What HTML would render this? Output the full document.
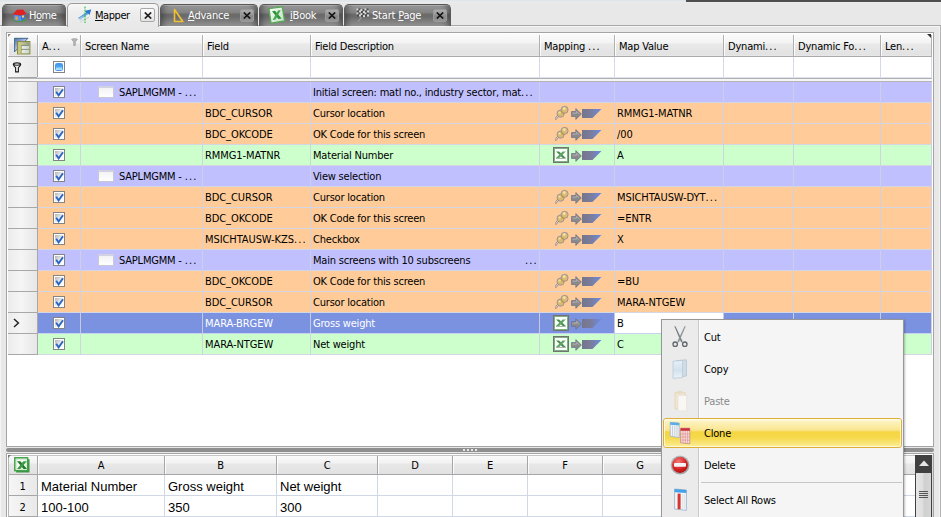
<!DOCTYPE html>
<html lang="en"><head><meta charset="utf-8"><title>Mapper</title>
<style>
html,body{margin:0;padding:0}
body{width:941px;height:517px;overflow:hidden;position:relative;background:#e8e8e8;font-family:"DejaVu Sans Condensed","Liberation Sans",sans-serif;font-size:11px;letter-spacing:-0.2px;color:#000}
div,span,svg{position:absolute;box-sizing:border-box}
.t{white-space:nowrap;line-height:13px;height:13px}
u{text-decoration:underline}
.tab{top:4px;height:22px;border-radius:5px 5px 0 0;border:1px solid #5a5a5a;border-bottom:none;background:linear-gradient(#b2b2b2 0,#b2b2b2 1px,#949494 1.5px,#828282 8px,#6a6a6a 9px,#6c6c6c 12px,#8a8a8a 19px,#989898 21px);color:#fff;box-shadow:inset 7px 0 6px -5px rgba(0,0,0,0.38),inset -7px 0 6px -5px rgba(0,0,0,0.38)}
.tab.act{box-shadow:none;top:3px;height:24px;background:linear-gradient(#f7f7f7,#eeeeee 8px,#e8e8e8);border:1px solid #9c9c9c;border-bottom:none;color:#000}
.cb{width:14px;height:13px;border:1px solid #9a9a9a;border-radius:2px;background:linear-gradient(#acacac 0,#969696 5px,#888888 6px,#949494)}
.tab.act .cb{width:15px;height:14px;border:1px solid #a8a8a8;background:linear-gradient(#fdfdfd,#e2e2e2)}
.hc{top:34px;height:22px;background:linear-gradient(#fbfbfb 0,#f3f3f3 9px,#e9e9e9 10px,#e2e2e2 21px,#ececec 22px)}
.vl{width:1px}
.hl{height:1px}
.row{left:38px;width:893px;height:20px}
.ind{left:8px;width:29px;height:20px;background:linear-gradient(90deg,#ececec,#f5f5f5 45%,#e7e7e7)}
.chk{width:12px;height:12px;border:1px solid #848484;background:#fff}
.chk i{position:absolute;left:1px;top:1px;width:8px;height:8px;background:linear-gradient(135deg,#b4b4b4,#f4f4f4 60%,#fff)}
.sh{font-family:"Liberation Sans",sans-serif;font-size:13px;letter-spacing:0;line-height:15px;height:15px;white-space:nowrap}
.shh{font-size:11px;line-height:13px;height:13px;white-space:nowrap;text-align:center}
.d{position:static;letter-spacing:1.1px}
.mi{left:704px;white-space:nowrap;line-height:13px;height:13px}
</style></head>
<body>
<div style="left:0;top:0;width:686px;height:2px;background:linear-gradient(#dfe4e8,#e6e9ec)"></div>
<div style="left:686px;top:0;width:255px;height:2px;background:#4e4e4e"></div>
<div style="left:0;top:2px;width:941px;height:1px;background:#ececec"></div>
<div style="left:0;top:25px;width:941px;height:1px;background:#a9a9a9"></div>
<div style="left:0;top:26px;width:941px;height:1px;background:#f4f4f4"></div>
<div style="left:940px;top:26px;width:1px;height:491px;background:#b4b4b4"></div>
<div style="left:939px;top:27px;width:1px;height:490px;background:#f2f2f2"></div>
<div style="left:0;top:26px;width:1px;height:491px;background:#f4f4f4"></div>
<div class="tab" style="left:2px;width:64px"><svg style="left:9px;top:4px" width="15" height="13" viewBox="0 0 15 13"><ellipse cx="7.5" cy="11" rx="7" ry="1.8" fill="#4a9a3a"/><path d="M2 6 L2 11 L9 12 L13 10 L13 5 Z" fill="#3f78d8"/><path d="M2 6 L9 7 L9 12 L2 11 Z" fill="#5b8fe6"/><path d="M0.5 5.5 L5 0.8 L11 0.5 L14.5 4.8 L9.5 6.6 Z" fill="#e02222"/><rect x="3.5" y="7.5" width="2.2" height="3.6" fill="#e9a23a"/><rect x="10" y="6.5" width="2" height="2" fill="#f3d36a"/></svg><span class="t" style="left:26px;top:4px;letter-spacing:-0.5px">H<u>o</u>me</span></div>
<div class="tab act" style="left:67px;width:92px"><svg style="left:9px;top:2px" width="16" height="18" viewBox="0 0 16 18"><path d="M1 12 L9 6.5 L8 5 L14 3.5 L12.5 9 L11.5 7.8 L3.5 13.5 Z" fill="#5b9fe0"/><path d="M9 6.5 L8 5 L14 3.5 L12.5 9 L11.5 7.8 Z" fill="#2b78cc"/><path d="M1 13 L7 9.5 L4 14 Z" fill="#a9cdee"/><path d="M3 16 L12 11" stroke="#c9c9c9" stroke-width="0.8"/><line x1="8" y1="0.5" x2="8" y2="17" stroke="#35c24a" stroke-width="1.2" stroke-dasharray="2 1"/></svg><span class="t" style="left:27px;top:5px;letter-spacing:-0.45px"><u>M</u>apper</span><div class="cb" style="left:72px;top:4px"><svg style="left:3px;top:3px" width="8" height="7" viewBox="0 0 8 7"><path d="M0.8 0.5 L7.2 6.5 M7.2 0.5 L0.8 6.5" stroke="#1c1c1c" stroke-width="1.7" fill="none"/></svg></div></div>
<div class="tab" style="left:160px;width:98px"><svg style="left:12px;top:3px" width="12" height="16" viewBox="0 0 12 16"><path d="M1.5 1.5 L9.8 13.5 L1.5 13.5 Z" fill="none" stroke="#f0c030" stroke-width="1.6" stroke-linejoin="round"/></svg><span class="t" style="left:27px;top:4px"><u>A</u>dvance</span><div class="cb" style="left:79px;top:4px"><svg style="left:2px;top:2px" width="8" height="7" viewBox="0 0 8 7"><path d="M0.8 0.5 L7.2 6.5 M7.2 0.5 L0.8 6.5" stroke="#141414" stroke-width="1.7" fill="none"/></svg></div></div>
<div class="tab" style="left:259px;width:84px"><svg style="left:8px;top:1px" width="18" height="18" viewBox="0 0 18 18"><defs><linearGradient id="ib" x1="0" y1="0" x2="1" y2="1"><stop offset="0" stop-color="#ffffff"/><stop offset="1" stop-color="#b9e0b9"/></linearGradient></defs><path d="M1 2.6 L14.2 0.8 L16.6 15 L3 17.2 Z" fill="url(#ib)" stroke="#58a858" stroke-width="1.3"/><path d="M4 5.2 L7 4.8 L13.6 12.6 L10.4 13.1 Z" fill="#2f8f3a"/><path d="M10 4.4 L12.8 4 L7.6 13.6 L4.6 14 Z" fill="#44a84e"/></svg><span class="t" style="left:30px;top:4px"><u>i</u>Book</span><div class="cb" style="left:65px;top:4px"><svg style="left:2px;top:2px" width="8" height="7" viewBox="0 0 8 7"><path d="M0.8 0.5 L7.2 6.5 M7.2 0.5 L0.8 6.5" stroke="#141414" stroke-width="1.7" fill="none"/></svg></div></div>
<div class="tab" style="left:344px;width:107px"><svg style="left:10px;top:3px" width="15" height="15" viewBox="0 0 15 15"><rect x="1.5" y="0.5" width="2" height="2" fill="#e4e4e4" opacity="0.9"/><rect x="3.5" y="0.5" width="2" height="2" fill="#3c3c3c" opacity="0.75"/><rect x="5.5" y="1.1" width="2" height="2" fill="#e4e4e4" opacity="0.9"/><rect x="7.5" y="1.1" width="2" height="2" fill="#3c3c3c" opacity="0.75"/><rect x="9.5" y="0.5" width="2" height="2" fill="#e4e4e4" opacity="0.9"/><rect x="11.5" y="0.5" width="2" height="2" fill="#3c3c3c" opacity="0.75"/><rect x="2.0" y="2.5" width="2" height="2" fill="#3c3c3c" opacity="0.75"/><rect x="4.0" y="2.5" width="2" height="2" fill="#e4e4e4" opacity="0.9"/><rect x="6.0" y="3.1" width="2" height="2" fill="#3c3c3c" opacity="0.75"/><rect x="8.0" y="3.1" width="2" height="2" fill="#e4e4e4" opacity="0.9"/><rect x="10.0" y="2.5" width="2" height="2" fill="#3c3c3c" opacity="0.75"/><rect x="12.0" y="2.5" width="2" height="2" fill="#e4e4e4" opacity="0.9"/><rect x="1.5" y="4.5" width="2" height="2" fill="#e4e4e4" opacity="0.9"/><rect x="3.5" y="4.5" width="2" height="2" fill="#3c3c3c" opacity="0.75"/><rect x="5.5" y="5.1" width="2" height="2" fill="#e4e4e4" opacity="0.9"/><rect x="7.5" y="5.1" width="2" height="2" fill="#3c3c3c" opacity="0.75"/><rect x="9.5" y="4.5" width="2" height="2" fill="#e4e4e4" opacity="0.9"/><rect x="11.5" y="4.5" width="2" height="2" fill="#3c3c3c" opacity="0.75"/><rect x="2.0" y="6.5" width="2" height="2" fill="#3c3c3c" opacity="0.75"/><rect x="4.0" y="6.5" width="2" height="2" fill="#e4e4e4" opacity="0.9"/><rect x="6.0" y="7.1" width="2" height="2" fill="#3c3c3c" opacity="0.75"/><rect x="8.0" y="7.1" width="2" height="2" fill="#e4e4e4" opacity="0.9"/><rect x="10.0" y="6.5" width="2" height="2" fill="#3c3c3c" opacity="0.75"/><rect x="12.0" y="6.5" width="2" height="2" fill="#e4e4e4" opacity="0.9"/><path d="M6.5 9 L3.2 13.6" stroke="#9a9a9a" stroke-width="1.1"/></svg><span class="t" style="left:27px;top:4px">Start <u>P</u>age</span><div class="cb" style="left:88px;top:4px"><svg style="left:2px;top:2px" width="8" height="7" viewBox="0 0 8 7"><path d="M0.8 0.5 L7.2 6.5 M7.2 0.5 L0.8 6.5" stroke="#141414" stroke-width="1.7" fill="none"/></svg></div></div>
<div style="left:6px;top:32px;width:928px;height:415px;border:1px solid #a4a4a4;background:#fff"></div>
<div class="hc" style="left:8px;width:29px"></div>
<div class="vl" style="left:37px;top:35px;height:21px;background:#b0b0b0"></div>
<div class="vl" style="left:8px;top:34px;height:22px;background:rgba(255,255,255,0.85)"></div>
<div class="hc" style="left:38px;width:42px"></div>
<div class="vl" style="left:80px;top:35px;height:21px;background:#b0b0b0"></div>
<div class="vl" style="left:38px;top:34px;height:22px;background:rgba(255,255,255,0.85)"></div>
<span class="t" style="left:42px;top:40px">A<span class="d">...</span></span>
<div class="hc" style="left:81px;width:121px"></div>
<div class="vl" style="left:202px;top:35px;height:21px;background:#b0b0b0"></div>
<div class="vl" style="left:81px;top:34px;height:22px;background:rgba(255,255,255,0.85)"></div>
<span class="t" style="left:85px;top:40px">Screen Name</span>
<div class="hc" style="left:203px;width:107px"></div>
<div class="vl" style="left:310px;top:35px;height:21px;background:#b0b0b0"></div>
<div class="vl" style="left:203px;top:34px;height:22px;background:rgba(255,255,255,0.85)"></div>
<span class="t" style="left:207px;top:40px">Field</span>
<div class="hc" style="left:311px;width:228px"></div>
<div class="vl" style="left:539px;top:35px;height:21px;background:#b0b0b0"></div>
<div class="vl" style="left:311px;top:34px;height:22px;background:rgba(255,255,255,0.85)"></div>
<span class="t" style="left:315px;top:40px">Field Description</span>
<div class="hc" style="left:540px;width:74px"></div>
<div class="vl" style="left:614px;top:35px;height:21px;background:#b0b0b0"></div>
<div class="vl" style="left:540px;top:34px;height:22px;background:rgba(255,255,255,0.85)"></div>
<span class="t" style="left:544px;top:40px">Mapping <span class="d">...</span></span>
<div class="hc" style="left:615px;width:108px"></div>
<div class="vl" style="left:723px;top:35px;height:21px;background:#b0b0b0"></div>
<div class="vl" style="left:615px;top:34px;height:22px;background:rgba(255,255,255,0.85)"></div>
<span class="t" style="left:619px;top:40px">Map Value</span>
<div class="hc" style="left:724px;width:69px"></div>
<div class="vl" style="left:793px;top:35px;height:21px;background:#b0b0b0"></div>
<div class="vl" style="left:724px;top:34px;height:22px;background:rgba(255,255,255,0.85)"></div>
<span class="t" style="left:728px;top:40px">Dynami<span class="d">...</span></span>
<div class="hc" style="left:794px;width:86px"></div>
<div class="vl" style="left:880px;top:35px;height:21px;background:#b0b0b0"></div>
<div class="vl" style="left:794px;top:34px;height:22px;background:rgba(255,255,255,0.85)"></div>
<span class="t" style="left:798px;top:40px">Dynamic Fo<span class="d">...</span></span>
<div class="hc" style="left:881px;width:50px"></div>
<div class="vl" style="left:931px;top:35px;height:21px;background:#b0b0b0"></div>
<div class="vl" style="left:881px;top:34px;height:22px;background:rgba(255,255,255,0.85)"></div>
<span class="t" style="left:885px;top:40px">Len<span class="d">...</span></span>
<div class="hl" style="left:8px;top:56px;width:924px;background:#aaaaaa"></div>
<svg style="left:927px;top:34px" width="4" height="4" viewBox="0 0 4 4"><path d="M0 0 L4 0 L4 4 Z" fill="#333"/></svg>
<svg style="left:8px;top:34px" width="3" height="3" viewBox="0 0 3 3"><path d="M0 0 L3 0 L0 3 Z" fill="#8a8a8a"/></svg>
<svg style="left:14px;top:37px" width="17" height="18" viewBox="0 0 17 18"><defs><linearGradient id="cc" x1="0" y1="0" x2="0.7" y2="0.7"><stop offset="0" stop-color="#3f7896"/><stop offset="0.45" stop-color="#8f9ede"/><stop offset="1" stop-color="#f4f4ff"/></linearGradient><linearGradient id="cd" x1="0" y1="0" x2="1" y2="0"><stop offset="0" stop-color="#d6d68c"/><stop offset="1" stop-color="#8fa088"/></linearGradient><linearGradient id="ce" x1="0" y1="0" x2="1" y2="0"><stop offset="0" stop-color="#ffffff"/><stop offset="1" stop-color="#c4d2c4"/></linearGradient></defs><path d="M0.3 1.3 L14 1.3 L0.3 15 Z" fill="url(#cc)" stroke="#2f5f7a" stroke-width="0.9"/><rect x="3.5" y="4.5" width="12.4" height="12.4" fill="url(#ce)" stroke="#8a8a3e"/><rect x="4" y="5" width="11.4" height="3" fill="url(#cd)"/><rect x="4" y="5" width="3" height="11.4" fill="#c9c97e"/><path d="M7 8.5 L15.4 8.5 M7 12.4 L15.4 12.4" stroke="#8f8f86" stroke-width="1"/><path d="M7.4 8.5 L7.4 16.4" stroke="#9a9a56" stroke-width="0.8"/></svg>
<svg style="left:71px;top:38px" width="7" height="8" viewBox="0 0 7 8"><path d="M0.5 1.2 Q3.5 -0.4 6.5 1.2 L4.3 4 L4.3 7.5 L2.7 7.5 L2.7 4 Z" fill="#b5b5b5" stroke="#9a9a9a" stroke-width="0.6"/></svg>
<div style="left:8px;top:57px;width:29px;height:20px;background:linear-gradient(90deg,#f6f6f6,#e9e9e9)"></div>
<div class="vl" style="left:37px;top:57px;height:20px;background:#a6a6a6"></div>
<div class="vl" style="left:80px;top:57px;height:20px;background:#d3d9ea"></div>
<div class="vl" style="left:202px;top:57px;height:20px;background:#d3d9ea"></div>
<div class="vl" style="left:310px;top:57px;height:20px;background:#d3d9ea"></div>
<div class="vl" style="left:539px;top:57px;height:20px;background:#d3d9ea"></div>
<div class="vl" style="left:614px;top:57px;height:20px;background:#d3d9ea"></div>
<div class="vl" style="left:723px;top:57px;height:20px;background:#d3d9ea"></div>
<div class="vl" style="left:793px;top:57px;height:20px;background:#d3d9ea"></div>
<div class="vl" style="left:880px;top:57px;height:20px;background:#d3d9ea"></div>
<div class="vl" style="left:931px;top:57px;height:20px;background:#d3d9ea"></div>
<div class="vl" style="left:931px;top:82px;height:273px;background:#cdd0e2"></div>
<svg style="left:12px;top:62px" width="10" height="11" viewBox="0 0 10 11"><path d="M1.3 2.4 Q1.3 0.9 5 0.9 Q8.7 0.9 8.7 2.4 Q8.7 3.4 6.4 5.6 L6.4 9.9 L3.6 9.9 L3.6 5.6 Q1.3 3.4 1.3 2.4 Z M1.3 2.6 Q5 4 8.7 2.6" fill="none" stroke="#1e1e1e" stroke-width="1.1"/></svg>
<div style="left:53px;top:61px;width:12px;height:12px;border:1px solid #848484;background:#fff"><div style="left:1px;top:1px;width:8px;height:8px;border-radius:1.5px;background:linear-gradient(#3f97ee 0,#52a8f4 3px,#98dafe 4px,#c0eeff 8px);border:1px solid #4a98ea"></div></div>
<div class="hl" style="left:8px;top:77px;width:29px;background:#a4a4a4"></div>
<div class="hl" style="left:8px;top:78px;width:29px;background:#b8b8b8"></div>
<div class="hl" style="left:37px;top:77px;width:895px;background:#dce4f2"></div>
<div class="hl" style="left:37px;top:78px;width:895px;background:#b0b0b0"></div>
<div style="left:8px;top:79px;width:924px;height:2px;background:#f6f6f6"></div>
<div class="hl" style="left:8px;top:81px;width:924px;background:#b4b4b4"></div>
<div class="ind" style="top:82px"></div>
<div class="hl" style="left:8px;top:102px;width:29px;background:#a8a8a8"></div>
<div class="row" style="top:82px;background:#c0c0ff"></div>
<div class="hl" style="left:38px;top:102px;width:893px;background:#d4d6e4"></div>
<div class="chk" style="left:53px;top:86px"><i></i><svg style="left:1px;top:1px" width="9" height="9" viewBox="0 0 9 9"><path d="M1.2 3.8 L3.6 7.4 L8 1.2" stroke="#2a66c2" stroke-width="1.9" fill="none"/></svg></div>
<div style="left:98px;top:86px;width:16px;height:12px;border:1px solid #c9c9d6;border-top:2px solid #d2d2e2;background:linear-gradient(#f3f3f3,#fff)"></div>
<span class="t" style="left:119px;top:86px;color:#000">SAPLMGMM - <span class="d">...</span></span>
<span class="t" style="left:313px;top:86px;color:#000">Initial screen: matl no., industry sector, mat<span class="d">...</span></span>
<div class="ind" style="top:103px"></div>
<div class="hl" style="left:8px;top:123px;width:29px;background:#a8a8a8"></div>
<div class="row" style="top:103px;background:#ffcc99"></div>
<div class="hl" style="left:38px;top:123px;width:893px;background:#d4d6e4"></div>
<div class="chk" style="left:53px;top:107px"><i></i><svg style="left:1px;top:1px" width="9" height="9" viewBox="0 0 9 9"><path d="M1.2 3.8 L3.6 7.4 L8 1.2" stroke="#2a66c2" stroke-width="1.9" fill="none"/></svg></div>
<span class="t" style="left:205px;top:107px;color:#000;letter-spacing:-0.08px">BDC_CURSOR</span>
<span class="t" style="left:313px;top:107px;color:#000">Cursor location</span>
<svg style="left:555px;top:105px" width="14" height="15" viewBox="0 0 14 15"><path d="M3.4 10.4 L0.9 13.6" stroke="#8a8694" stroke-width="2.2" stroke-linecap="round"/><path d="M3.3 10.5 L1 13.5" stroke="#f1e3b4" stroke-width="1" stroke-linecap="round"/><circle cx="5.6" cy="8.6" r="3.6" fill="#d9b96e" stroke="#8d87a0" stroke-width="0.8"/><circle cx="9.6" cy="4.8" r="3.5" fill="#dcbc70" stroke="#8d87a0" stroke-width="0.8"/><path d="M6 6 L9 9" stroke="#b89850" stroke-width="1.2"/><circle cx="9.2" cy="3.6" r="1.4" fill="#f2e2a8"/><circle cx="4.6" cy="7.6" r="1.2" fill="#efdca0"/></svg>
<svg style="left:571px;top:108px" width="11" height="12" viewBox="0 0 11 12"><path d="M0.5 3.5 L4.8 3.5 L4.8 0.6 L10.4 6 L4.8 11.4 L4.8 8.5 L0.5 8.5 Z" fill="#8a8a8a" stroke="#6a6e8c" stroke-width="0.7"/><path d="M1.6 5.2 L5.6 5.2 L5.6 3.4 L8.4 6" stroke="#b4b4b4" stroke-width="0.9" fill="none"/></svg>
<svg style="left:582px;top:109px" width="20" height="9" viewBox="0 0 20 9"><defs><linearGradient id="g1" x1="0" x2="1" y1="0" y2="0"><stop offset="0" stop-color="#75758a"/><stop offset="0.5" stop-color="#7b7da0"/><stop offset="0.8" stop-color="#6f86cc"/><stop offset="1" stop-color="#5f8ee6"/></linearGradient></defs><path d="M0 0 L19.5 0 L10.5 9 L0 9 Z" fill="url(#g1)"/></svg>
<span class="t" style="left:617px;top:107px;color:#000;letter-spacing:-0.08px">RMMG1-MATNR</span>
<div class="ind" style="top:124px"></div>
<div class="hl" style="left:8px;top:144px;width:29px;background:#a8a8a8"></div>
<div class="row" style="top:124px;background:#ffcc99"></div>
<div class="hl" style="left:38px;top:144px;width:893px;background:#d4d6e4"></div>
<div class="chk" style="left:53px;top:128px"><i></i><svg style="left:1px;top:1px" width="9" height="9" viewBox="0 0 9 9"><path d="M1.2 3.8 L3.6 7.4 L8 1.2" stroke="#2a66c2" stroke-width="1.9" fill="none"/></svg></div>
<span class="t" style="left:205px;top:128px;color:#000;letter-spacing:-0.08px">BDC_OKCODE</span>
<span class="t" style="left:313px;top:128px;color:#000">OK Code for this screen</span>
<svg style="left:555px;top:126px" width="14" height="15" viewBox="0 0 14 15"><path d="M3.4 10.4 L0.9 13.6" stroke="#8a8694" stroke-width="2.2" stroke-linecap="round"/><path d="M3.3 10.5 L1 13.5" stroke="#f1e3b4" stroke-width="1" stroke-linecap="round"/><circle cx="5.6" cy="8.6" r="3.6" fill="#d9b96e" stroke="#8d87a0" stroke-width="0.8"/><circle cx="9.6" cy="4.8" r="3.5" fill="#dcbc70" stroke="#8d87a0" stroke-width="0.8"/><path d="M6 6 L9 9" stroke="#b89850" stroke-width="1.2"/><circle cx="9.2" cy="3.6" r="1.4" fill="#f2e2a8"/><circle cx="4.6" cy="7.6" r="1.2" fill="#efdca0"/></svg>
<svg style="left:571px;top:129px" width="11" height="12" viewBox="0 0 11 12"><path d="M0.5 3.5 L4.8 3.5 L4.8 0.6 L10.4 6 L4.8 11.4 L4.8 8.5 L0.5 8.5 Z" fill="#8a8a8a" stroke="#6a6e8c" stroke-width="0.7"/><path d="M1.6 5.2 L5.6 5.2 L5.6 3.4 L8.4 6" stroke="#b4b4b4" stroke-width="0.9" fill="none"/></svg>
<svg style="left:582px;top:130px" width="20" height="9" viewBox="0 0 20 9"><defs><linearGradient id="g2" x1="0" x2="1" y1="0" y2="0"><stop offset="0" stop-color="#75758a"/><stop offset="0.5" stop-color="#7b7da0"/><stop offset="0.8" stop-color="#6f86cc"/><stop offset="1" stop-color="#5f8ee6"/></linearGradient></defs><path d="M0 0 L19.5 0 L10.5 9 L0 9 Z" fill="url(#g2)"/></svg>
<span class="t" style="left:617px;top:128px;color:#000;letter-spacing:-0.08px">/00</span>
<div class="ind" style="top:145px"></div>
<div class="hl" style="left:8px;top:165px;width:29px;background:#a8a8a8"></div>
<div class="row" style="top:145px;background:#ccffcc"></div>
<div class="hl" style="left:38px;top:165px;width:893px;background:#d4d6e4"></div>
<div class="chk" style="left:53px;top:149px"><i></i><svg style="left:1px;top:1px" width="9" height="9" viewBox="0 0 9 9"><path d="M1.2 3.8 L3.6 7.4 L8 1.2" stroke="#2a66c2" stroke-width="1.9" fill="none"/></svg></div>
<span class="t" style="left:205px;top:149px;color:#000;letter-spacing:-0.08px">RMMG1-MATNR</span>
<span class="t" style="left:313px;top:149px;color:#000">Material Number</span>
<svg style="left:553px;top:147px" width="16" height="16" viewBox="0 0 16 16"><rect x="0.5" y="0.5" width="15" height="15" fill="#fff" stroke="#737373"/><rect x="1.5" y="1.5" width="13" height="13" fill="#fbfffb" stroke="#7fae7f"/><path d="M3 4.4 L6.2 4.4 L12.8 11 L9.6 11 Z" fill="#4d8f53"/><path d="M9.6 4.4 L12.8 4.4 L6.2 11 L3 11 Z" fill="#5da565"/><path d="M3 11.5 L12.8 11.5" stroke="#8a938a" stroke-width="0.7"/><path d="M6.4 4 L9.2 4 L7.8 5.6 Z" fill="#fff"/></svg>
<svg style="left:571px;top:150px" width="11" height="12" viewBox="0 0 11 12"><path d="M0.5 3.5 L4.8 3.5 L4.8 0.6 L10.4 6 L4.8 11.4 L4.8 8.5 L0.5 8.5 Z" fill="#8a8a8a" stroke="#6a6e8c" stroke-width="0.7"/><path d="M1.6 5.2 L5.6 5.2 L5.6 3.4 L8.4 6" stroke="#b4b4b4" stroke-width="0.9" fill="none"/></svg>
<svg style="left:582px;top:151px" width="20" height="9" viewBox="0 0 20 9"><defs><linearGradient id="g3" x1="0" x2="1" y1="0" y2="0"><stop offset="0" stop-color="#75758a"/><stop offset="0.5" stop-color="#7b7da0"/><stop offset="0.8" stop-color="#6f86cc"/><stop offset="1" stop-color="#5f8ee6"/></linearGradient></defs><path d="M0 0 L19.5 0 L10.5 9 L0 9 Z" fill="url(#g3)"/></svg>
<span class="t" style="left:617px;top:149px;color:#000;letter-spacing:-0.08px">A</span>
<div class="ind" style="top:166px"></div>
<div class="hl" style="left:8px;top:186px;width:29px;background:#a8a8a8"></div>
<div class="row" style="top:166px;background:#c0c0ff"></div>
<div class="hl" style="left:38px;top:186px;width:893px;background:#d4d6e4"></div>
<div class="chk" style="left:53px;top:170px"><i></i><svg style="left:1px;top:1px" width="9" height="9" viewBox="0 0 9 9"><path d="M1.2 3.8 L3.6 7.4 L8 1.2" stroke="#2a66c2" stroke-width="1.9" fill="none"/></svg></div>
<div style="left:98px;top:170px;width:16px;height:12px;border:1px solid #c9c9d6;border-top:2px solid #d2d2e2;background:linear-gradient(#f3f3f3,#fff)"></div>
<span class="t" style="left:119px;top:170px;color:#000">SAPLMGMM - <span class="d">...</span></span>
<span class="t" style="left:313px;top:170px;color:#000">View selection</span>
<div class="ind" style="top:187px"></div>
<div class="hl" style="left:8px;top:207px;width:29px;background:#a8a8a8"></div>
<div class="row" style="top:187px;background:#ffcc99"></div>
<div class="hl" style="left:38px;top:207px;width:893px;background:#d4d6e4"></div>
<div class="chk" style="left:53px;top:191px"><i></i><svg style="left:1px;top:1px" width="9" height="9" viewBox="0 0 9 9"><path d="M1.2 3.8 L3.6 7.4 L8 1.2" stroke="#2a66c2" stroke-width="1.9" fill="none"/></svg></div>
<span class="t" style="left:205px;top:191px;color:#000;letter-spacing:-0.08px">BDC_CURSOR</span>
<span class="t" style="left:313px;top:191px;color:#000">Cursor location</span>
<svg style="left:555px;top:189px" width="14" height="15" viewBox="0 0 14 15"><path d="M3.4 10.4 L0.9 13.6" stroke="#8a8694" stroke-width="2.2" stroke-linecap="round"/><path d="M3.3 10.5 L1 13.5" stroke="#f1e3b4" stroke-width="1" stroke-linecap="round"/><circle cx="5.6" cy="8.6" r="3.6" fill="#d9b96e" stroke="#8d87a0" stroke-width="0.8"/><circle cx="9.6" cy="4.8" r="3.5" fill="#dcbc70" stroke="#8d87a0" stroke-width="0.8"/><path d="M6 6 L9 9" stroke="#b89850" stroke-width="1.2"/><circle cx="9.2" cy="3.6" r="1.4" fill="#f2e2a8"/><circle cx="4.6" cy="7.6" r="1.2" fill="#efdca0"/></svg>
<svg style="left:571px;top:192px" width="11" height="12" viewBox="0 0 11 12"><path d="M0.5 3.5 L4.8 3.5 L4.8 0.6 L10.4 6 L4.8 11.4 L4.8 8.5 L0.5 8.5 Z" fill="#8a8a8a" stroke="#6a6e8c" stroke-width="0.7"/><path d="M1.6 5.2 L5.6 5.2 L5.6 3.4 L8.4 6" stroke="#b4b4b4" stroke-width="0.9" fill="none"/></svg>
<svg style="left:582px;top:193px" width="20" height="9" viewBox="0 0 20 9"><defs><linearGradient id="g5" x1="0" x2="1" y1="0" y2="0"><stop offset="0" stop-color="#75758a"/><stop offset="0.5" stop-color="#7b7da0"/><stop offset="0.8" stop-color="#6f86cc"/><stop offset="1" stop-color="#5f8ee6"/></linearGradient></defs><path d="M0 0 L19.5 0 L10.5 9 L0 9 Z" fill="url(#g5)"/></svg>
<span class="t" style="left:617px;top:191px;color:#000;letter-spacing:-0.08px">MSICHTAUSW-DYT<span class="d">...</span></span>
<div class="ind" style="top:208px"></div>
<div class="hl" style="left:8px;top:228px;width:29px;background:#a8a8a8"></div>
<div class="row" style="top:208px;background:#ffcc99"></div>
<div class="hl" style="left:38px;top:228px;width:893px;background:#d4d6e4"></div>
<div class="chk" style="left:53px;top:212px"><i></i><svg style="left:1px;top:1px" width="9" height="9" viewBox="0 0 9 9"><path d="M1.2 3.8 L3.6 7.4 L8 1.2" stroke="#2a66c2" stroke-width="1.9" fill="none"/></svg></div>
<span class="t" style="left:205px;top:212px;color:#000;letter-spacing:-0.08px">BDC_OKCODE</span>
<span class="t" style="left:313px;top:212px;color:#000">OK Code for this screen</span>
<svg style="left:555px;top:210px" width="14" height="15" viewBox="0 0 14 15"><path d="M3.4 10.4 L0.9 13.6" stroke="#8a8694" stroke-width="2.2" stroke-linecap="round"/><path d="M3.3 10.5 L1 13.5" stroke="#f1e3b4" stroke-width="1" stroke-linecap="round"/><circle cx="5.6" cy="8.6" r="3.6" fill="#d9b96e" stroke="#8d87a0" stroke-width="0.8"/><circle cx="9.6" cy="4.8" r="3.5" fill="#dcbc70" stroke="#8d87a0" stroke-width="0.8"/><path d="M6 6 L9 9" stroke="#b89850" stroke-width="1.2"/><circle cx="9.2" cy="3.6" r="1.4" fill="#f2e2a8"/><circle cx="4.6" cy="7.6" r="1.2" fill="#efdca0"/></svg>
<svg style="left:571px;top:213px" width="11" height="12" viewBox="0 0 11 12"><path d="M0.5 3.5 L4.8 3.5 L4.8 0.6 L10.4 6 L4.8 11.4 L4.8 8.5 L0.5 8.5 Z" fill="#8a8a8a" stroke="#6a6e8c" stroke-width="0.7"/><path d="M1.6 5.2 L5.6 5.2 L5.6 3.4 L8.4 6" stroke="#b4b4b4" stroke-width="0.9" fill="none"/></svg>
<svg style="left:582px;top:214px" width="20" height="9" viewBox="0 0 20 9"><defs><linearGradient id="g6" x1="0" x2="1" y1="0" y2="0"><stop offset="0" stop-color="#75758a"/><stop offset="0.5" stop-color="#7b7da0"/><stop offset="0.8" stop-color="#6f86cc"/><stop offset="1" stop-color="#5f8ee6"/></linearGradient></defs><path d="M0 0 L19.5 0 L10.5 9 L0 9 Z" fill="url(#g6)"/></svg>
<span class="t" style="left:617px;top:212px;color:#000;letter-spacing:-0.08px">=ENTR</span>
<div class="ind" style="top:229px"></div>
<div class="hl" style="left:8px;top:249px;width:29px;background:#a8a8a8"></div>
<div class="row" style="top:229px;background:#ffcc99"></div>
<div class="hl" style="left:38px;top:249px;width:893px;background:#d4d6e4"></div>
<div class="chk" style="left:53px;top:233px"><i></i><svg style="left:1px;top:1px" width="9" height="9" viewBox="0 0 9 9"><path d="M1.2 3.8 L3.6 7.4 L8 1.2" stroke="#2a66c2" stroke-width="1.9" fill="none"/></svg></div>
<span class="t" style="left:205px;top:233px;color:#000;letter-spacing:-0.08px">MSICHTAUSW-KZS<span class="d">...</span></span>
<span class="t" style="left:313px;top:233px;color:#000">Checkbox</span>
<svg style="left:555px;top:231px" width="14" height="15" viewBox="0 0 14 15"><path d="M3.4 10.4 L0.9 13.6" stroke="#8a8694" stroke-width="2.2" stroke-linecap="round"/><path d="M3.3 10.5 L1 13.5" stroke="#f1e3b4" stroke-width="1" stroke-linecap="round"/><circle cx="5.6" cy="8.6" r="3.6" fill="#d9b96e" stroke="#8d87a0" stroke-width="0.8"/><circle cx="9.6" cy="4.8" r="3.5" fill="#dcbc70" stroke="#8d87a0" stroke-width="0.8"/><path d="M6 6 L9 9" stroke="#b89850" stroke-width="1.2"/><circle cx="9.2" cy="3.6" r="1.4" fill="#f2e2a8"/><circle cx="4.6" cy="7.6" r="1.2" fill="#efdca0"/></svg>
<svg style="left:571px;top:234px" width="11" height="12" viewBox="0 0 11 12"><path d="M0.5 3.5 L4.8 3.5 L4.8 0.6 L10.4 6 L4.8 11.4 L4.8 8.5 L0.5 8.5 Z" fill="#8a8a8a" stroke="#6a6e8c" stroke-width="0.7"/><path d="M1.6 5.2 L5.6 5.2 L5.6 3.4 L8.4 6" stroke="#b4b4b4" stroke-width="0.9" fill="none"/></svg>
<svg style="left:582px;top:235px" width="20" height="9" viewBox="0 0 20 9"><defs><linearGradient id="g7" x1="0" x2="1" y1="0" y2="0"><stop offset="0" stop-color="#75758a"/><stop offset="0.5" stop-color="#7b7da0"/><stop offset="0.8" stop-color="#6f86cc"/><stop offset="1" stop-color="#5f8ee6"/></linearGradient></defs><path d="M0 0 L19.5 0 L10.5 9 L0 9 Z" fill="url(#g7)"/></svg>
<span class="t" style="left:617px;top:233px;color:#000;letter-spacing:-0.08px">X</span>
<div class="ind" style="top:250px"></div>
<div class="hl" style="left:8px;top:270px;width:29px;background:#a8a8a8"></div>
<div class="row" style="top:250px;background:#c0c0ff"></div>
<div class="hl" style="left:38px;top:270px;width:893px;background:#d4d6e4"></div>
<div class="chk" style="left:53px;top:254px"><i></i><svg style="left:1px;top:1px" width="9" height="9" viewBox="0 0 9 9"><path d="M1.2 3.8 L3.6 7.4 L8 1.2" stroke="#2a66c2" stroke-width="1.9" fill="none"/></svg></div>
<div style="left:98px;top:254px;width:16px;height:12px;border:1px solid #c9c9d6;border-top:2px solid #d2d2e2;background:linear-gradient(#f3f3f3,#fff)"></div>
<span class="t" style="left:119px;top:254px;color:#000">SAPLMGMM - <span class="d">...</span></span>
<span class="t" style="left:313px;top:254px;color:#000">Main screens with 10 subscreens</span>
<div class="ind" style="top:271px"></div>
<div class="hl" style="left:8px;top:291px;width:29px;background:#a8a8a8"></div>
<div class="row" style="top:271px;background:#ffcc99"></div>
<div class="hl" style="left:38px;top:291px;width:893px;background:#d4d6e4"></div>
<div class="chk" style="left:53px;top:275px"><i></i><svg style="left:1px;top:1px" width="9" height="9" viewBox="0 0 9 9"><path d="M1.2 3.8 L3.6 7.4 L8 1.2" stroke="#2a66c2" stroke-width="1.9" fill="none"/></svg></div>
<span class="t" style="left:205px;top:275px;color:#000;letter-spacing:-0.08px">BDC_OKCODE</span>
<span class="t" style="left:313px;top:275px;color:#000">OK Code for this screen</span>
<svg style="left:555px;top:273px" width="14" height="15" viewBox="0 0 14 15"><path d="M3.4 10.4 L0.9 13.6" stroke="#8a8694" stroke-width="2.2" stroke-linecap="round"/><path d="M3.3 10.5 L1 13.5" stroke="#f1e3b4" stroke-width="1" stroke-linecap="round"/><circle cx="5.6" cy="8.6" r="3.6" fill="#d9b96e" stroke="#8d87a0" stroke-width="0.8"/><circle cx="9.6" cy="4.8" r="3.5" fill="#dcbc70" stroke="#8d87a0" stroke-width="0.8"/><path d="M6 6 L9 9" stroke="#b89850" stroke-width="1.2"/><circle cx="9.2" cy="3.6" r="1.4" fill="#f2e2a8"/><circle cx="4.6" cy="7.6" r="1.2" fill="#efdca0"/></svg>
<svg style="left:571px;top:276px" width="11" height="12" viewBox="0 0 11 12"><path d="M0.5 3.5 L4.8 3.5 L4.8 0.6 L10.4 6 L4.8 11.4 L4.8 8.5 L0.5 8.5 Z" fill="#8a8a8a" stroke="#6a6e8c" stroke-width="0.7"/><path d="M1.6 5.2 L5.6 5.2 L5.6 3.4 L8.4 6" stroke="#b4b4b4" stroke-width="0.9" fill="none"/></svg>
<svg style="left:582px;top:277px" width="20" height="9" viewBox="0 0 20 9"><defs><linearGradient id="g9" x1="0" x2="1" y1="0" y2="0"><stop offset="0" stop-color="#75758a"/><stop offset="0.5" stop-color="#7b7da0"/><stop offset="0.8" stop-color="#6f86cc"/><stop offset="1" stop-color="#5f8ee6"/></linearGradient></defs><path d="M0 0 L19.5 0 L10.5 9 L0 9 Z" fill="url(#g9)"/></svg>
<span class="t" style="left:617px;top:275px;color:#000;letter-spacing:-0.08px">=BU</span>
<div class="ind" style="top:292px"></div>
<div class="hl" style="left:8px;top:312px;width:29px;background:#a8a8a8"></div>
<div class="row" style="top:292px;background:#ffcc99"></div>
<div class="hl" style="left:38px;top:312px;width:893px;background:#d4d6e4"></div>
<div class="chk" style="left:53px;top:296px"><i></i><svg style="left:1px;top:1px" width="9" height="9" viewBox="0 0 9 9"><path d="M1.2 3.8 L3.6 7.4 L8 1.2" stroke="#2a66c2" stroke-width="1.9" fill="none"/></svg></div>
<span class="t" style="left:205px;top:296px;color:#000;letter-spacing:-0.08px">BDC_CURSOR</span>
<span class="t" style="left:313px;top:296px;color:#000">Cursor location</span>
<svg style="left:555px;top:294px" width="14" height="15" viewBox="0 0 14 15"><path d="M3.4 10.4 L0.9 13.6" stroke="#8a8694" stroke-width="2.2" stroke-linecap="round"/><path d="M3.3 10.5 L1 13.5" stroke="#f1e3b4" stroke-width="1" stroke-linecap="round"/><circle cx="5.6" cy="8.6" r="3.6" fill="#d9b96e" stroke="#8d87a0" stroke-width="0.8"/><circle cx="9.6" cy="4.8" r="3.5" fill="#dcbc70" stroke="#8d87a0" stroke-width="0.8"/><path d="M6 6 L9 9" stroke="#b89850" stroke-width="1.2"/><circle cx="9.2" cy="3.6" r="1.4" fill="#f2e2a8"/><circle cx="4.6" cy="7.6" r="1.2" fill="#efdca0"/></svg>
<svg style="left:571px;top:297px" width="11" height="12" viewBox="0 0 11 12"><path d="M0.5 3.5 L4.8 3.5 L4.8 0.6 L10.4 6 L4.8 11.4 L4.8 8.5 L0.5 8.5 Z" fill="#8a8a8a" stroke="#6a6e8c" stroke-width="0.7"/><path d="M1.6 5.2 L5.6 5.2 L5.6 3.4 L8.4 6" stroke="#b4b4b4" stroke-width="0.9" fill="none"/></svg>
<svg style="left:582px;top:298px" width="20" height="9" viewBox="0 0 20 9"><defs><linearGradient id="g10" x1="0" x2="1" y1="0" y2="0"><stop offset="0" stop-color="#75758a"/><stop offset="0.5" stop-color="#7b7da0"/><stop offset="0.8" stop-color="#6f86cc"/><stop offset="1" stop-color="#5f8ee6"/></linearGradient></defs><path d="M0 0 L19.5 0 L10.5 9 L0 9 Z" fill="url(#g10)"/></svg>
<span class="t" style="left:617px;top:296px;color:#000;letter-spacing:-0.08px">MARA-NTGEW</span>
<div class="ind" style="top:313px"></div>
<div class="hl" style="left:8px;top:333px;width:29px;background:#a8a8a8"></div>
<div class="row" style="top:313px;background:#7b92e0"></div>
<div class="hl" style="left:38px;top:333px;width:893px;background:#c9d2f0"></div>
<div class="chk" style="left:53px;top:317px"><i></i><svg style="left:1px;top:1px" width="9" height="9" viewBox="0 0 9 9"><path d="M1.2 3.8 L3.6 7.4 L8 1.2" stroke="#2a66c2" stroke-width="1.9" fill="none"/></svg></div>
<span class="t" style="left:205px;top:317px;color:#fff;letter-spacing:-0.08px">MARA-BRGEW</span>
<span class="t" style="left:313px;top:317px;color:#fff">Gross weight</span>
<svg style="left:553px;top:315px" width="16" height="16" viewBox="0 0 16 16"><rect x="0.5" y="0.5" width="15" height="15" fill="#fff" stroke="#737373"/><rect x="1.5" y="1.5" width="13" height="13" fill="#fbfffb" stroke="#7fae7f"/><path d="M3 4.4 L6.2 4.4 L12.8 11 L9.6 11 Z" fill="#4d8f53"/><path d="M9.6 4.4 L12.8 4.4 L6.2 11 L3 11 Z" fill="#5da565"/><path d="M3 11.5 L12.8 11.5" stroke="#8a938a" stroke-width="0.7"/><path d="M6.4 4 L9.2 4 L7.8 5.6 Z" fill="#fff"/></svg>
<svg style="left:571px;top:318px" width="11" height="12" viewBox="0 0 11 12"><path d="M0.5 3.5 L4.8 3.5 L4.8 0.6 L10.4 6 L4.8 11.4 L4.8 8.5 L0.5 8.5 Z" fill="#8a8a8a" stroke="#6a6e8c" stroke-width="0.7"/><path d="M1.6 5.2 L5.6 5.2 L5.6 3.4 L8.4 6" stroke="#b4b4b4" stroke-width="0.9" fill="none"/></svg>
<svg style="left:582px;top:319px" width="20" height="9" viewBox="0 0 20 9"><defs><linearGradient id="g11" x1="0" x2="1" y1="0" y2="0"><stop offset="0" stop-color="#75758a"/><stop offset="0.5" stop-color="#7b7da0"/><stop offset="0.8" stop-color="#6f86cc"/><stop offset="1" stop-color="#5f8ee6"/></linearGradient></defs><path d="M0 0 L19.5 0 L10.5 9 L0 9 Z" fill="url(#g11)"/></svg>
<div style="left:615px;top:313px;width:108px;height:20px;background:#fff"></div>
<span class="t" style="left:617px;top:317px;color:#000;letter-spacing:-0.08px">B</span>
<div class="ind" style="top:334px"></div>
<div class="hl" style="left:8px;top:354px;width:29px;background:#a8a8a8"></div>
<div class="row" style="top:334px;background:#ccffcc"></div>
<div class="hl" style="left:38px;top:354px;width:893px;background:#d4d6e4"></div>
<div class="chk" style="left:53px;top:338px"><i></i><svg style="left:1px;top:1px" width="9" height="9" viewBox="0 0 9 9"><path d="M1.2 3.8 L3.6 7.4 L8 1.2" stroke="#2a66c2" stroke-width="1.9" fill="none"/></svg></div>
<span class="t" style="left:205px;top:338px;color:#000;letter-spacing:-0.08px">MARA-NTGEW</span>
<span class="t" style="left:313px;top:338px;color:#000">Net weight</span>
<svg style="left:553px;top:336px" width="16" height="16" viewBox="0 0 16 16"><rect x="0.5" y="0.5" width="15" height="15" fill="#fff" stroke="#737373"/><rect x="1.5" y="1.5" width="13" height="13" fill="#fbfffb" stroke="#7fae7f"/><path d="M3 4.4 L6.2 4.4 L12.8 11 L9.6 11 Z" fill="#4d8f53"/><path d="M9.6 4.4 L12.8 4.4 L6.2 11 L3 11 Z" fill="#5da565"/><path d="M3 11.5 L12.8 11.5" stroke="#8a938a" stroke-width="0.7"/><path d="M6.4 4 L9.2 4 L7.8 5.6 Z" fill="#fff"/></svg>
<svg style="left:571px;top:339px" width="11" height="12" viewBox="0 0 11 12"><path d="M0.5 3.5 L4.8 3.5 L4.8 0.6 L10.4 6 L4.8 11.4 L4.8 8.5 L0.5 8.5 Z" fill="#8a8a8a" stroke="#6a6e8c" stroke-width="0.7"/><path d="M1.6 5.2 L5.6 5.2 L5.6 3.4 L8.4 6" stroke="#b4b4b4" stroke-width="0.9" fill="none"/></svg>
<svg style="left:582px;top:340px" width="20" height="9" viewBox="0 0 20 9"><defs><linearGradient id="g12" x1="0" x2="1" y1="0" y2="0"><stop offset="0" stop-color="#75758a"/><stop offset="0.5" stop-color="#7b7da0"/><stop offset="0.8" stop-color="#6f86cc"/><stop offset="1" stop-color="#5f8ee6"/></linearGradient></defs><path d="M0 0 L19.5 0 L10.5 9 L0 9 Z" fill="url(#g12)"/></svg>
<span class="t" style="left:617px;top:338px;color:#000;letter-spacing:-0.08px">C</span>
<span class="t" style="left:525px;top:254px"><span class="d">...</span></span>
<div class="vl" style="left:80px;top:82px;height:273px;background:rgba(205,208,226,0.9)"></div>
<div class="vl" style="left:202px;top:82px;height:273px;background:rgba(205,208,226,0.9)"></div>
<div class="vl" style="left:310px;top:82px;height:273px;background:rgba(205,208,226,0.9)"></div>
<div class="vl" style="left:539px;top:82px;height:273px;background:rgba(205,208,226,0.9)"></div>
<div class="vl" style="left:614px;top:82px;height:273px;background:rgba(205,208,226,0.9)"></div>
<div class="vl" style="left:723px;top:82px;height:273px;background:rgba(205,208,226,0.9)"></div>
<div class="vl" style="left:793px;top:82px;height:273px;background:rgba(205,208,226,0.9)"></div>
<div class="vl" style="left:880px;top:82px;height:273px;background:rgba(205,208,226,0.9)"></div>
<div class="vl" style="left:37px;top:82px;height:273px;background:#a8a8a8"></div>
<svg style="left:13px;top:318px" width="7" height="10" viewBox="0 0 7 10"><path d="M1 1 L5.4 5 L1 9" stroke="#222" stroke-width="1.5" fill="none"/></svg>
<div style="left:6px;top:448px;width:928px;height:4px;border-radius:2px;background:#8f8f8f"></div>
<div style="left:463px;top:449px;width:16px;height:2px;background:repeating-linear-gradient(90deg,#e6e6e6 0 2px,transparent 2px 4px)"></div>
<div style="left:6px;top:453px;width:928px;height:70px;border:1px solid #a4a4a4;background:#fff"></div>
<div style="left:8px;top:455px;width:29px;height:19px;background:linear-gradient(#fbfbfb 0,#f2f2f2 8px,#e8e8e8 9px,#e1e1e1 19px)"></div>
<div class="vl" style="left:37px;top:455px;height:19px;background:#a6a6a6"></div>
<div class="vl" style="left:8px;top:455px;height:19px;background:rgba(255,255,255,0.85)"></div>
<div style="left:38px;top:455px;width:126px;height:19px;background:linear-gradient(#fbfbfb 0,#f2f2f2 8px,#e8e8e8 9px,#e1e1e1 19px)"></div>
<div class="vl" style="left:164px;top:455px;height:19px;background:#a6a6a6"></div>
<span class="shh" style="left:38px;top:459px;width:126px">A</span>
<div class="vl" style="left:164px;top:475px;height:42px;background:#d0d7e5"></div>
<div class="vl" style="left:38px;top:455px;height:19px;background:rgba(255,255,255,0.85)"></div>
<div style="left:165px;top:455px;width:111px;height:19px;background:linear-gradient(#fbfbfb 0,#f2f2f2 8px,#e8e8e8 9px,#e1e1e1 19px)"></div>
<div class="vl" style="left:276px;top:455px;height:19px;background:#a6a6a6"></div>
<span class="shh" style="left:165px;top:459px;width:111px">B</span>
<div class="vl" style="left:276px;top:475px;height:42px;background:#d0d7e5"></div>
<div class="vl" style="left:165px;top:455px;height:19px;background:rgba(255,255,255,0.85)"></div>
<div style="left:277px;top:455px;width:100px;height:19px;background:linear-gradient(#fbfbfb 0,#f2f2f2 8px,#e8e8e8 9px,#e1e1e1 19px)"></div>
<div class="vl" style="left:377px;top:455px;height:19px;background:#a6a6a6"></div>
<span class="shh" style="left:277px;top:459px;width:100px">C</span>
<div class="vl" style="left:377px;top:475px;height:42px;background:#d0d7e5"></div>
<div class="vl" style="left:277px;top:455px;height:19px;background:rgba(255,255,255,0.85)"></div>
<div style="left:378px;top:455px;width:74px;height:19px;background:linear-gradient(#fbfbfb 0,#f2f2f2 8px,#e8e8e8 9px,#e1e1e1 19px)"></div>
<div class="vl" style="left:452px;top:455px;height:19px;background:#a6a6a6"></div>
<span class="shh" style="left:378px;top:459px;width:74px">D</span>
<div class="vl" style="left:452px;top:475px;height:42px;background:#d0d7e5"></div>
<div class="vl" style="left:378px;top:455px;height:19px;background:rgba(255,255,255,0.85)"></div>
<div style="left:453px;top:455px;width:74px;height:19px;background:linear-gradient(#fbfbfb 0,#f2f2f2 8px,#e8e8e8 9px,#e1e1e1 19px)"></div>
<div class="vl" style="left:527px;top:455px;height:19px;background:#a6a6a6"></div>
<span class="shh" style="left:453px;top:459px;width:74px">E</span>
<div class="vl" style="left:527px;top:475px;height:42px;background:#d0d7e5"></div>
<div class="vl" style="left:453px;top:455px;height:19px;background:rgba(255,255,255,0.85)"></div>
<div style="left:528px;top:455px;width:74px;height:19px;background:linear-gradient(#fbfbfb 0,#f2f2f2 8px,#e8e8e8 9px,#e1e1e1 19px)"></div>
<div class="vl" style="left:602px;top:455px;height:19px;background:#a6a6a6"></div>
<span class="shh" style="left:528px;top:459px;width:74px">F</span>
<div class="vl" style="left:602px;top:475px;height:42px;background:#d0d7e5"></div>
<div class="vl" style="left:528px;top:455px;height:19px;background:rgba(255,255,255,0.85)"></div>
<div style="left:603px;top:455px;width:74px;height:19px;background:linear-gradient(#fbfbfb 0,#f2f2f2 8px,#e8e8e8 9px,#e1e1e1 19px)"></div>
<div class="vl" style="left:677px;top:455px;height:19px;background:#a6a6a6"></div>
<span class="shh" style="left:603px;top:459px;width:74px">G</span>
<div class="vl" style="left:677px;top:475px;height:42px;background:#d0d7e5"></div>
<div class="vl" style="left:603px;top:455px;height:19px;background:rgba(255,255,255,0.85)"></div>
<div style="left:678px;top:455px;width:74px;height:19px;background:linear-gradient(#fbfbfb 0,#f2f2f2 8px,#e8e8e8 9px,#e1e1e1 19px)"></div>
<div class="vl" style="left:752px;top:455px;height:19px;background:#a6a6a6"></div>
<span class="shh" style="left:678px;top:459px;width:74px">H</span>
<div class="vl" style="left:752px;top:475px;height:42px;background:#d0d7e5"></div>
<div class="vl" style="left:678px;top:455px;height:19px;background:rgba(255,255,255,0.85)"></div>
<div style="left:753px;top:455px;width:74px;height:19px;background:linear-gradient(#fbfbfb 0,#f2f2f2 8px,#e8e8e8 9px,#e1e1e1 19px)"></div>
<div class="vl" style="left:827px;top:455px;height:19px;background:#a6a6a6"></div>
<span class="shh" style="left:753px;top:459px;width:74px">I</span>
<div class="vl" style="left:827px;top:475px;height:42px;background:#d0d7e5"></div>
<div class="vl" style="left:753px;top:455px;height:19px;background:rgba(255,255,255,0.85)"></div>
<div style="left:828px;top:455px;width:74px;height:19px;background:linear-gradient(#fbfbfb 0,#f2f2f2 8px,#e8e8e8 9px,#e1e1e1 19px)"></div>
<div class="vl" style="left:902px;top:455px;height:19px;background:#a6a6a6"></div>
<span class="shh" style="left:828px;top:459px;width:74px">J</span>
<div class="vl" style="left:902px;top:475px;height:42px;background:#d0d7e5"></div>
<div class="vl" style="left:828px;top:455px;height:19px;background:rgba(255,255,255,0.85)"></div>
<div style="left:903px;top:455px;width:29px;height:19px;background:linear-gradient(#fbfbfb 0,#f2f2f2 8px,#e8e8e8 9px,#e1e1e1 19px)"></div>
<div class="vl" style="left:932px;top:455px;height:19px;background:#a6a6a6"></div>
<div class="vl" style="left:903px;top:455px;height:19px;background:rgba(255,255,255,0.85)"></div>
<div class="hl" style="left:8px;top:474px;width:925px;background:#a6a6a6"></div>
<div style="left:8px;top:475px;width:29px;height:20px;background:linear-gradient(90deg,#f6f6f6,#e9e9e9)"></div>
<div class="hl" style="left:8px;top:495px;width:29px;background:#a6a6a6"></div>
<div class="hl" style="left:38px;top:495px;width:895px;background:#d0d7e5"></div>
<span class="shh" style="left:8px;top:480px;width:29px">1</span>
<div style="left:8px;top:496px;width:29px;height:20px;background:linear-gradient(90deg,#f6f6f6,#e9e9e9)"></div>
<div class="hl" style="left:8px;top:516px;width:29px;background:#a6a6a6"></div>
<div class="hl" style="left:38px;top:516px;width:895px;background:#d0d7e5"></div>
<span class="shh" style="left:8px;top:501px;width:29px">2</span>
<div class="vl" style="left:37px;top:475px;height:42px;background:#a6a6a6"></div>
<span class="sh" style="left:41px;top:479px">Material Number</span>
<span class="sh" style="left:168px;top:479px">Gross weight</span>
<span class="sh" style="left:280px;top:479px">Net weight</span>
<span class="sh" style="left:41px;top:500px">100-100</span>
<span class="sh" style="left:168px;top:500px">350</span>
<span class="sh" style="left:280px;top:500px">300</span>
<svg style="left:14px;top:457px" width="16" height="16" viewBox="0 0 16 16"><rect x="2.2" y="2.2" width="13.3" height="13.3" fill="#3a9440"/><rect x="0.8" y="0.8" width="12.8" height="12.8" fill="#f6fcf6" stroke="#43a049" stroke-width="1.5"/><rect x="2.4" y="2.4" width="9.6" height="9.6" fill="none" stroke="#cfe8cf" stroke-width="0.8"/><path d="M3 4.2 L6.4 4.2 L13 12 L9.6 12 Z" fill="#237a2b"/><path d="M9.4 4.2 L12.8 4.2 L6.4 12 L3 12 Z" fill="#3c9a44"/></svg>
<div class="vl" style="left:8px;top:455px;height:62px;background:#b6b6b6"></div>
<div class="hl" style="left:8px;top:455px;width:907px;background:#c4c4c4"></div>
<svg style="left:8px;top:455px" width="3" height="3" viewBox="0 0 3 3"><path d="M0 0 L3 0 L0 3 Z" fill="#777"/></svg>
<div style="left:932px;top:455px;width:1px;height:62px;background:#dcdcdc"></div>
<div style="left:915px;top:455px;width:17px;height:62px;background:#404040"></div>
<div style="left:916px;top:473px;width:15px;height:44px;background:linear-gradient(90deg,#e6e6e6 0,#dedede 7px,#cfcfcf 8px,#d6d6d6 15px)"></div>
<svg style="left:919px;top:460px" width="10" height="6" viewBox="0 0 10 6"><path d="M0 6 L5 0.5 L10 6 Z" fill="#e6e6e6"/></svg>
<div style="left:919px;top:491px;width:9px;height:1px;background:#555"></div>
<div style="left:919px;top:493px;width:9px;height:1px;background:#555"></div>
<div style="left:919px;top:495px;width:9px;height:1px;background:#555"></div>
<div style="left:919px;top:497px;width:9px;height:1px;background:#555"></div>
<div style="left:661px;top:319px;width:243px;height:210px;border:1px solid #979797;background:#f5f5f5;box-shadow:1px 1px 2px rgba(0,0,0,0.25)"></div>
<div style="left:662px;top:320px;width:36px;height:200px;background:#ebebeb"></div>
<div style="left:698px;top:320px;width:1px;height:200px;background:#c9c9c9"></div>
<div style="left:699px;top:320px;width:1px;height:200px;background:#fbfbfb"></div>
<div style="left:663px;top:418px;width:239px;height:30px;border:1px solid #dfae3a;border-radius:3px;background:linear-gradient(#fffbe2 0,#fcf1bc 3px,#fae692 11px,#f5d542 13px,#f6d94c 19px,#faea88 26px,#fcf2b2 30px)"></div>
<div style="left:664px;top:419px;width:237px;height:28px;border:1px solid rgba(255,253,230,0.8);border-radius:2px"></div>
<div style="left:701px;top:482px;width:201px;height:1px;background:#c6c6c6"></div>
<span class="mi" style="top:331px;color:#000">Cut</span>
<span class="mi" style="top:363px;color:#000">Copy</span>
<span class="mi" style="top:395px;color:#8a8a8a">Paste</span>
<span class="mi" style="top:427px;color:#000">Clone</span>
<span class="mi" style="top:459px;color:#000">Delete</span>
<span class="mi" style="top:494px;color:#000">Select All Rows</span>
<svg style="left:671px;top:325px" width="18" height="23" viewBox="0 0 18 23"><path d="M3.2 1 L4.6 1.6 L11.6 16.4 L10.2 17.4 Z" fill="#747c80"/><path d="M14.8 1 L13.4 1.6 L6.4 16.4 L7.8 17.4 Z" fill="#8a9296"/><circle cx="4.2" cy="19.2" r="2.2" fill="none" stroke="#5e666a" stroke-width="1.3"/><circle cx="13.8" cy="19.2" r="2.2" fill="none" stroke="#5e666a" stroke-width="1.3"/></svg>
<svg style="left:672px;top:359px" width="16" height="20" viewBox="0 0 16 20"><defs><linearGradient id="cp" x1="0" y1="0" x2="0" y2="1"><stop offset="0" stop-color="#e6f0f7"/><stop offset="0.55" stop-color="#d3e2ee"/><stop offset="1" stop-color="#eaf2f8"/></linearGradient></defs><path d="M5 1.6 L14.4 0.8 L14.4 17 L5 18 Z" fill="#cfdde8" stroke="#aebfcd" stroke-width="0.7"/><path d="M1 2.2 L10.6 1.4 L10.6 18.6 L1 19.4 Z" fill="url(#cp)" stroke="#b3c4d2" stroke-width="0.7"/></svg>
<svg style="left:674px;top:390px" width="14" height="22" viewBox="0 0 14 22"><path d="M1 2.6 L11 2.6 L11 19 L1 19 Z" fill="#f1e6cf" stroke="#e3d3b0" stroke-width="0.8"/><rect x="3.6" y="0.8" width="4.6" height="3" fill="#e6dcc6"/><path d="M4 5.4 L12.6 5.4 L12.6 21 L4 21 Z" fill="#f8f7f4" stroke="#e4e1da" stroke-width="0.7"/></svg>
<svg style="left:669px;top:421px" width="22" height="24" viewBox="0 0 22 24"><path d="M1.2 1.2 L10.2 2 L10.2 16.6 L1.2 15.2 Z" fill="#f2f5f8" stroke="#9fb2c8" stroke-width="0.8"/><path d="M1.2 1.2 L10.2 2 L10.2 4.6 L1.2 3.8 Z" fill="#5aaee8"/><path d="M3.5 4.5 L3.5 15 M5.8 4.7 L5.8 15.4 M8 5 L8 15.8" stroke="#c3ccd6" stroke-width="0.9"/><path d="M11.6 7.2 L20.8 7.2 L20.8 22.8 L11.6 21.8 Z" fill="#f7dede" stroke="#c08a8a" stroke-width="0.8"/><path d="M11.6 7.2 L20.8 7.2 L20.8 9.8 L11.6 9.8 Z" fill="#c8323a"/><path d="M14 10 L14 22 M16.3 10 L16.3 22.2 M18.6 10 L18.6 22.4 M11.6 13 L20.8 13 M11.6 16 L20.8 16 M11.6 19 L20.8 19.2" stroke="#e09a9a" stroke-width="0.8"/></svg>
<svg style="left:670px;top:455px" width="20" height="20" viewBox="0 0 20 20"><defs><radialGradient id="rg" cx="0.4" cy="0.3" r="0.8"><stop offset="0" stop-color="#f47a7a"/><stop offset="0.6" stop-color="#d82020"/><stop offset="1" stop-color="#a01010"/></radialGradient></defs><circle cx="10" cy="10" r="9.5" fill="#bdbdbd"/><circle cx="10.3" cy="10.3" r="9" fill="#a6a6a6"/><circle cx="10" cy="10" r="7.9" fill="url(#rg)"/><rect x="4" y="8" width="12" height="3.8" rx="0.8" fill="#f4f4f4"/></svg>
<svg style="left:674px;top:488px" width="14" height="24" viewBox="0 0 14 24"><path d="M0.6 1 L12.4 2 L12.4 22.4 L0.6 21 Z" fill="#f3f5f8" stroke="#a9bccf" stroke-width="1"/><path d="M0.6 1 L12.4 2 L12.4 5 L0.6 4.2 Z" fill="#46a2e8"/><rect x="3.6" y="5.6" width="3" height="15.6" fill="#d2382e"/><path d="M8.6 6 L8.6 21.6 M10.6 6 L10.6 21.8" stroke="#d9dfe6" stroke-width="0.8"/></svg>
</body></html>
